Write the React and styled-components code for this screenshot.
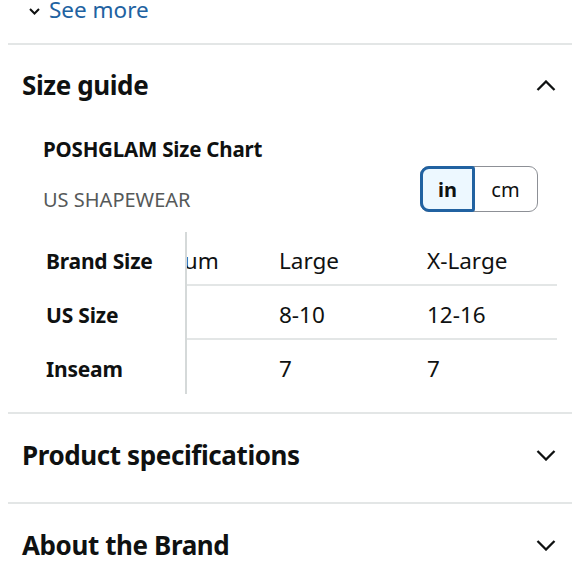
import React, { useLayoutEffect, useRef, useState } from 'react'
import styled, { createGlobalStyle } from 'styled-components'

const GlobalStyle = createGlobalStyle`
    body {
        margin: 0;
        background: #ffffff;
        font-family: "Noto Sans", "Open Sans", sans-serif;
        color: #0f1111;
    }
`

const Page = styled.div`
    width: 580px;
    height: 580px;
    overflow: hidden;
    padding: 0 8px;
    box-sizing: border-box;
`

const SeeMore = styled.a`
    display: flex;
    align-items: flex-start;
    gap: 9px;
    height: 50px;
    margin-top: -5px;
    padding-left: 21px;
    color: #2162a1;
    font-size: 22.5px;
    line-height: 30px;
    text-decoration: none;
    border-bottom: 2px solid #e3e6e6;
    box-sizing: border-box;

    svg {
        margin-top: 13px;
    }
`

const Section = styled.section`
    border-bottom: ${p => (p.last ? 'none' : '2px solid #e3e6e6')};
`

const SectionHead = styled.div`
    display: flex;
    align-items: center;
    justify-content: space-between;
    height: ${p => (p.open ? 80 : 88)}px;
    padding: 0 16px ${p => (p.open ? 0 : 6)}px 14px;
    box-sizing: border-box;
    font-size: 26px;
    font-weight: 700;
    letter-spacing: -0.4px;
`

const Body = styled.div`
    padding: 11px 15px 18px 22px;
`

const ChartTitle = styled.div`
    padding-left: 13px;
    font-size: 20.5px;
    font-weight: 700;
    letter-spacing: -0.2px;
    line-height: 26px;
`

const ChartMeta = styled.div`
    display: flex;
    align-items: flex-start;
    justify-content: space-between;
    padding-left: 13px;
    margin-top: 4px;
`

const Subtitle = styled.div`
    font-size: 20px;
    line-height: 26px;
    color: #565959;
    padding-top: 21px;
`

const Toggle = styled.div`
    display: flex;
    border: 1px solid #8d9096;
    border-radius: 9px;
    height: 46px;
    box-sizing: border-box;
    margin-right: 19px;
`

const ToggleBtn = styled.button`
    width: ${p => p.w}px;
    margin: -1px 0 -1px -1px;
    border: ${p => (p.active ? '3px solid #2162a1' : 'none')};
    border-radius: ${p => (p.active ? '9px 3px 3px 9px' : '0 9px 9px 0')};
    background: ${p => (p.active ? '#edf8ff' : 'transparent')};
    font-family: inherit;
    font-size: 20px;
    font-weight: ${p => (p.active ? 700 : 400)};
    color: #0f1111;
    padding: 0;
`

const TableScroll = styled.div`
    overflow-x: auto;
    scrollbar-width: none;
    margin-top: 19px;
    &::-webkit-scrollbar {
        display: none;
    }
`

const Table = styled.table`
    border-collapse: separate;
    border-spacing: 0;
    font-size: 22.5px;
    line-height: 28px;
`

const HeadCell = styled.th`
    position: sticky;
    left: 0;
    background: #ffffff;
    box-sizing: border-box;
    min-width: 157px;
    width: 157px;
    height: 54px;
    padding: 3px 0 0 16px;
    text-align: left;
    font-size: 21px;
    font-weight: 700;
    letter-spacing: -0.2px;
    border-right: 2px solid #d5d9d9;
    z-index: 1;
`

const Cell = styled.td`
    box-sizing: border-box;
    min-width: 148px;
    width: 148px;
    height: 54px;
    padding: ${p => (p.lastRow ? '4px' : '6px')} 0 0 16px;
    border-bottom: ${p => (p.lastRow ? 'none' : '2px solid #e3e6e6')};
    white-space: nowrap;
`

const Chevron = ({ up, size = 20 }) => (
    <svg width={size} height={size * 0.55} viewBox="0 0 20 11" fill="none">
        <polyline
            points={up ? '1.5,10 10,1.5 18.5,10' : '1.5,1 10,9.5 18.5,1'}
            stroke="#0f1111"
            strokeWidth="2.3"
        />
    </svg>
)

const SmallChevron = () => (
    <svg width="11" height="7" viewBox="0 0 11 7" fill="none">
        <polyline points="1,1 5.5,5.5 10,1" stroke="#0f1111" strokeWidth="2" />
    </svg>
)

const rows = [
    ['Brand Size', ['Medium', 'Large', 'X-Large']],
    ['US Size', ['4-6', '8-10', '12-16']],
    ['Inseam', ['7', '7', '7']]
]

const App = () => {
    const scrollRef = useRef(null)
    const [unit, setUnit] = useState('in')

    useLayoutEffect(() => {
        if (scrollRef.current) scrollRef.current.scrollLeft = 72
    }, [])

    return (
        <Page>
            <GlobalStyle />
            <SeeMore href="#">
                <SmallChevron />
                See more
            </SeeMore>

            <Section>
                <SectionHead open>
                    Size guide
                    <Chevron up />
                </SectionHead>
                <Body>
                    <ChartTitle>POSHGLAM Size Chart</ChartTitle>
                    <ChartMeta>
                        <Subtitle>US SHAPEWEAR</Subtitle>
                        <Toggle>
                            <ToggleBtn w={55} active={unit === 'in'} onClick={() => setUnit('in')}>in</ToggleBtn>
                            <ToggleBtn w={63} active={unit === 'cm'} onClick={() => setUnit('cm')}>cm</ToggleBtn>
                        </Toggle>
                    </ChartMeta>
                    <TableScroll ref={scrollRef}>
                        <Table>
                            <tbody>
                                {rows.map(([label, vals], i) => (
                                    <tr key={label}>
                                        <HeadCell>{label}</HeadCell>
                                        {vals.map((v, j) => (
                                            <Cell key={j} lastRow={i === rows.length - 1}>{v}</Cell>
                                        ))}
                                    </tr>
                                ))}
                            </tbody>
                        </Table>
                    </TableScroll>
                </Body>
            </Section>

            <Section>
                <SectionHead>
                    Product specifications
                    <Chevron />
                </SectionHead>
            </Section>

            <Section last>
                <SectionHead>
                    About the Brand
                    <Chevron />
                </SectionHead>
            </Section>
        </Page>
    )
}

export default App
